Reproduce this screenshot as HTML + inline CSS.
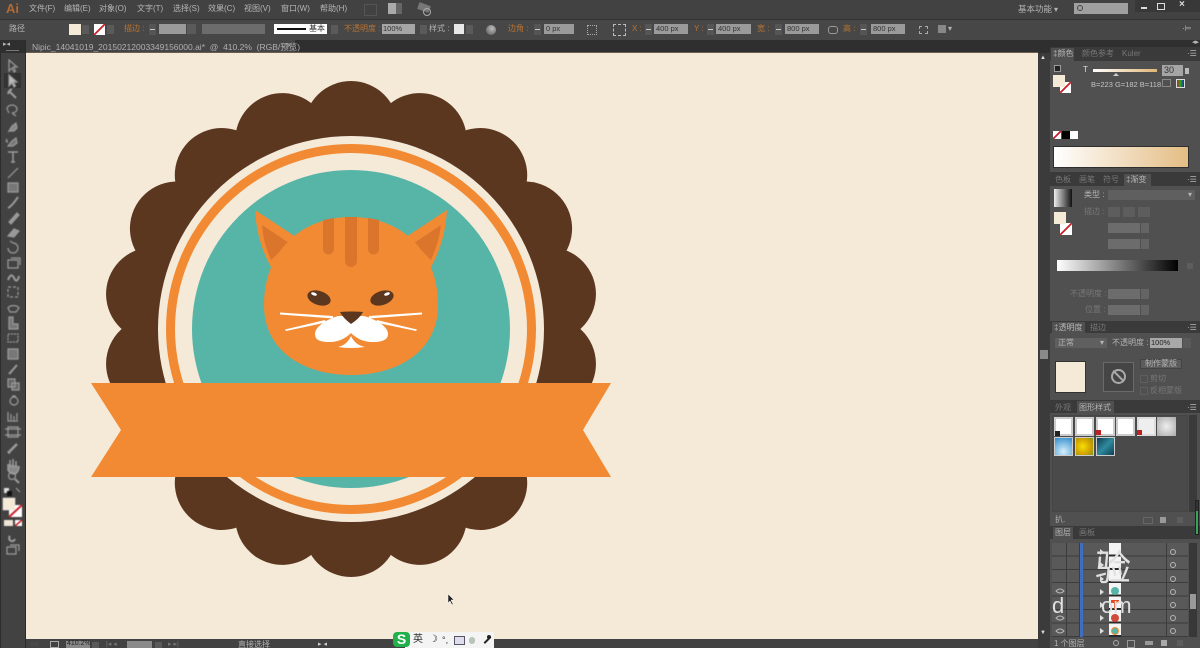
<!DOCTYPE html>
<html>
<head>
<meta charset="utf-8">
<style>
html,body{margin:0;padding:0;width:1200px;height:648px;overflow:hidden;background:#3f3f3f}
#r{position:relative;width:1200px;height:648px;overflow:hidden;font-family:"Liberation Sans","Noto Sans CJK SC",sans-serif;font-size:8px;color:#b5b5b5}
#r div,#r span.t{position:absolute}
.t{white-space:nowrap;line-height:10px;filter:blur(.35px)}
.o{color:#b8732f}
.f{background:#9a9a9a;color:#333}
.d{background:#6c6c6c}
.a{background:#5a5a5a;width:7px}
.s{background:linear-gradient(#c8c8c8,#c8c8c8) center/5px 1px no-repeat,#555;width:7px}
.dim{color:#777}
svg{position:absolute;left:0;top:0}
</style>
</head>
<body>
<div id="r">
<!-- top bars -->
<div style="left:0;top:0;width:1200px;height:19px;background:#424242"></div>
<div style="left:0;top:19px;width:1200px;height:1px;background:#333"></div>
<div style="left:0;top:20px;width:1200px;height:20px;background:#474747"></div>
<div style="left:0;top:40px;width:1200px;height:13px;background:#2f2f2f"></div>
<div style="left:26px;top:40px;width:269px;height:13px;background:#454545"></div>
<div style="left:26px;top:52px;width:1012px;height:1px;background:#6b5d50"></div>
<!-- canvas -->
<div style="left:26px;top:53px;width:1012px;height:586px;background:#f5e9d8"></div>

<span class="t" style="left:6px;top:2px;font-size:13px;line-height:14px;font-weight:bold;color:#b06a35">Ai</span>
<span class="t" style="left:29px;top:4px">文件(F)</span>
<span class="t" style="left:64px;top:4px">编辑(E)</span>
<span class="t" style="left:99px;top:4px">对象(O)</span>
<span class="t" style="left:137px;top:4px">文字(T)</span>
<span class="t" style="left:173px;top:4px">选择(S)</span>
<span class="t" style="left:208px;top:4px">效果(C)</span>
<span class="t" style="left:244px;top:4px">视图(V)</span>
<span class="t" style="left:281px;top:4px">窗口(W)</span>
<span class="t" style="left:320px;top:4px">帮助(H)</span>
<div style="left:364px;top:4px;width:11px;height:10px;border:1px solid #555"></div>
<div style="left:388px;top:3px;width:8px;height:11px;background:#aaa"></div>
<div style="left:396px;top:3px;width:6px;height:11px;background:#666"></div>
<div style="left:418px;top:4px;width:12px;height:7px;background:#777;transform:rotate(20deg)"></div>
<div style="left:423px;top:8px;width:6px;height:6px;border:1px solid #aaa;border-radius:50%"></div>
<span class="t" style="left:1018px;top:4px;font-size:8.5px">基本功能</span>
<span class="t" style="left:1054px;top:5px">▾</span>
<div style="left:1074px;top:3px;width:54px;height:11px;background:#a0a0a0"></div>
<div style="left:1077px;top:5px;width:4px;height:4px;border:1px solid #444;border-radius:50%"></div>
<div style="left:1135px;top:0;width:65px;height:12px;background:#383838"></div>
<div style="left:1141px;top:7px;width:6px;height:2px;background:#ddd"></div>
<div style="left:1157px;top:3px;width:6px;height:5px;border:1px solid #ddd"></div>
<span class="t" style="left:1179px;top:0;font-size:10px;font-weight:bold;color:#ddd">×</span>

<!-- control bar -->
<span class="t" style="left:9px;top:24px">路径</span>
<div style="left:69px;top:24px;width:12px;height:11px;background:#f5e9d8"></div>
<div class="a" style="left:82px;top:25px;height:9px"></div>
<div style="left:94px;top:24px;width:11px;height:11px;background:linear-gradient(135deg,#fff 44%,#c8202c 44%,#c8202c 56%,#fff 56%)"></div>
<div class="a" style="left:107px;top:25px;height:9px"></div>
<span class="t o" style="left:124px;top:24px">描边 :</span>
<div class="s" style="left:149px;top:24px;height:11px"></div>
<div class="f" style="left:159px;top:24px;width:27px;height:10px"></div>
<div class="a" style="left:187px;top:24px;width:9px;height:10px"></div>
<div class="d" style="left:202px;top:24px;width:63px;height:10px"></div>
<div style="left:274px;top:24px;width:53px;height:10px;background:#fff"></div>
<div style="left:277px;top:28px;width:29px;height:2px;background:#111"></div>
<span class="t" style="left:309px;top:24px;color:#333">基本</span>
<div class="a" style="left:331px;top:25px;height:9px"></div>
<span class="t o" style="left:344px;top:24px">不透明度 :</span>
<div class="f" style="left:382px;top:24px;width:33px;height:10px;background:#a5a5a5"></div>
<span class="t" style="left:383px;top:24px;color:#333;font-size:7.5px">100%</span>
<div class="a" style="left:420px;top:25px;height:9px"></div>
<span class="t" style="left:429px;top:24px">样式 :</span>
<div style="left:454px;top:24px;width:10px;height:10px;background:#e8e8e8"></div>
<div class="a" style="left:466px;top:25px;height:9px"></div>
<div style="left:486px;top:25px;width:10px;height:10px;border-radius:50%;background:radial-gradient(circle at 60% 35%,#bbb,#555)"></div>
<span class="t o" style="left:508px;top:24px">边角 :</span>
<div class="s" style="left:534px;top:24px;height:11px"></div>
<div class="f" style="left:544px;top:24px;width:30px;height:10px"></div>
<span class="t" style="left:546px;top:24px;color:#333;font-size:7.5px">0 px</span>
<div style="left:587px;top:25px;width:8px;height:8px;border:1px dotted #aaa"></div>
<div style="left:613px;top:24px;width:11px;height:10px;border:1px dashed #bbb"></div>
<span class="t o" style="left:632px;top:24px">X :</span>
<div class="s" style="left:645px;top:24px;height:11px"></div>
<div class="f" style="left:654px;top:24px;width:34px;height:10px"></div>
<span class="t" style="left:656px;top:24px;color:#333;font-size:7.5px">400 px</span>
<span class="t o" style="left:694px;top:24px">Y :</span>
<div class="s" style="left:707px;top:24px;height:11px"></div>
<div class="f" style="left:716px;top:24px;width:35px;height:10px"></div>
<span class="t" style="left:718px;top:24px;color:#333;font-size:7.5px">400 px</span>
<span class="t o" style="left:757px;top:24px">宽 :</span>
<div class="s" style="left:775px;top:24px;height:11px"></div>
<div class="f" style="left:785px;top:24px;width:34px;height:10px"></div>
<span class="t" style="left:787px;top:24px;color:#333;font-size:7.5px">800 px</span>
<div style="left:828px;top:26px;width:8px;height:6px;border:1px solid #999;border-radius:3px"></div>
<span class="t o" style="left:843px;top:24px">高 :</span>
<div class="s" style="left:860px;top:24px;height:11px"></div>
<div class="f" style="left:871px;top:24px;width:34px;height:10px"></div>
<span class="t" style="left:873px;top:24px;color:#333;font-size:7.5px">800 px</span>
<div style="left:919px;top:26px;width:7px;height:6px;border:1px dashed #aaa"></div>
<div style="left:938px;top:25px;width:8px;height:8px;background:#888"></div>
<span class="t" style="left:948px;top:24px">▾</span>
<span class="t" style="left:1182px;top:24px">·⊨</span>

<span class="t" style="left:32px;top:42px;font-size:8.5px;color:#b0b0b0">Nipic_14041019_20150212003349156000.ai* &nbsp;@&nbsp; 410.2% &nbsp;(RGB/预览)</span>
<span class="t" style="left:287px;top:41px">×</span>

<!-- artwork -->
<svg width="1200" height="648" viewBox="0 0 1200 648" style="z-index:2">
<defs><clipPath id="cv"><rect x="26" y="53" width="1012" height="586"/></clipPath></defs>
<g clip-path="url(#cv)">
<g fill="#5b3720">
<circle cx="351" cy="329" r="225"/>
<g id="b"><circle cx="351" cy="128" r="47"/></g>
<use href="#b" transform="rotate(20 351 329)"/><use href="#b" transform="rotate(40 351 329)"/>
<use href="#b" transform="rotate(60 351 329)"/><use href="#b" transform="rotate(80 351 329)"/>
<use href="#b" transform="rotate(100 351 329)"/><use href="#b" transform="rotate(120 351 329)"/>
<use href="#b" transform="rotate(140 351 329)"/><use href="#b" transform="rotate(160 351 329)"/>
<use href="#b" transform="rotate(180 351 329)"/><use href="#b" transform="rotate(200 351 329)"/>
<use href="#b" transform="rotate(220 351 329)"/><use href="#b" transform="rotate(240 351 329)"/>
<use href="#b" transform="rotate(260 351 329)"/><use href="#b" transform="rotate(280 351 329)"/>
<use href="#b" transform="rotate(300 351 329)"/><use href="#b" transform="rotate(320 351 329)"/>
<use href="#b" transform="rotate(340 351 329)"/>
</g>
<circle cx="351" cy="329" r="193" fill="#f5e9d8"/>
<circle cx="351" cy="329" r="185" fill="#f18a32"/>
<circle cx="351" cy="329" r="176" fill="#f5e9d8"/>
<circle cx="351" cy="329" r="159" fill="#57b5a8"/>
<!-- cat -->
<path fill="#f18a32" d="M255 210 L296 237 L274 272 Q257 245 255 210Z"/>
<path fill="#f18a32" d="M447 210 L406 237 L428 272 Q445 245 447 210Z"/>
<path fill="#dc752c" d="M262 225 L289 243 L271 260 Q263 242 262 225Z"/>
<path fill="#dc752c" d="M441 225 L414 243 L431 260 Q439 242 441 225Z"/>
<path fill="#f18a32" d="M351 217 C300 217 264 252 264 305 C264 352 305 375 351 375 C397 375 438 352 438 305 C438 252 402 217 351 217Z"/>
<path fill="#dc752c" d="M323 220 Q328 219 334 218 V249 a5.500 5.500 0 0 1-11 0Z"/>
<path fill="#dc752c" d="M345 217 H357 V261 a6 6 0 0 1-12 0Z"/>
<path fill="#dc752c" d="M368 218 Q374 219 379 220 V249 a5.500 5.500 0 0 1-11 0Z"/>
<ellipse cx="319" cy="298" rx="12" ry="7" fill="#5b3720" transform="rotate(18 319 298)"/>
<ellipse cx="382" cy="298" rx="12" ry="7" fill="#5b3720" transform="rotate(-18 382 298)"/>
<ellipse cx="314" cy="294" rx="3" ry="1.500" fill="#fff" transform="rotate(20 314 294)"/>
<ellipse cx="387" cy="294" rx="3" ry="1.500" fill="#fff" transform="rotate(-20 387 294)"/>
<g fill="#fff">
<path d="M280 312.500 L333 316 L333 318.500 L280 314.500 Z"/>
<path d="M285 329.500 L325 320 L326 322.500 L286 331 Z"/>
<path d="M422 312.500 L369 316 L369 318.500 L422 314.500 Z"/>
<path d="M417 329.500 L377 320 L376 322.500 L416 331 Z"/>
<path d="M338 316 C328 319 315 326 315 334 C315 341 322 342 330 342 C339 342 346 338 351 333 C356 338 363 342 372 342 C380 342 388 341 388 334 C388 326 375 319 364 316Z"/>
<path d="M338 347 Q347 345 351 336 Q355 345 365 347 Q351 349 338 347Z"/>
</g>
<path fill="#5b3720" d="M340 312 Q351 311 363 312 Q360 318 351 324 Q343 318 340 312Z"/>
<path fill="#f18a32" d="M91 383 H611 L583 430 L611 477 H91 L121 430Z"/>
<!-- cursor -->
<path d="M448 594 V603 L450 601 L452 605 L453 604 L451 600 H454Z" fill="#222" stroke="#fff" stroke-width=".5"/>
</g>
</svg>

<!-- left toolbar -->
<div style="left:0;top:53px;width:26px;height:595px;background:#424242"></div>
<div style="left:0;top:40px;width:26px;height:13px;background:#2f2f2f"></div>
<div style="left:0;top:53px;width:1px;height:595px;background:#2c2c2c"></div>
<div style="left:25px;top:40px;width:1px;height:608px;background:#2b2b2b"></div>
<span class="t" style="left:3px;top:40px;font-size:7px">▸◂</span>
<div style="left:6px;top:50px;width:13px;height:1px;background:#777"></div>
<div style="left:4px;top:73px;width:17px;height:15px;background:#333"></div>
<svg width="26" height="648" viewBox="0 0 26 648" style="z-index:3;filter:blur(.45px)">
<g fill="none" stroke="#9c9c9c" stroke-width="1.200">
<path d="M9 60 V71 L12 68 L14 72 L15.500 71 L13.500 67 H17Z"/>
<path d="M9 75 V86 L12 83 L14 87 L15.500 86 L13.500 82 H17Z" fill="#bbb"/>
<path d="M9 91 L16 98 M9 91 l3 -2 M9 91 l-1 3" stroke-width="2"/>
<path d="M7 109 a5 4 0 1 1 5 4 M12 113 l4 3 M7 109 l2 4"/>
<path d="M9 131 L12 126 L16 123 L17 128 L14 131Z M8 132 L10 130" fill="#888"/>
<path d="M8 146 L12 141 L16 138 L17 143 L13 146Z M7 139 q-2 3 1 3" fill="#777"/>
<path d="M8 152 H18 M13 152 V162 M11 162 H15" stroke-width="1.500"/>
<path d="M8 178 L18 168"/>
<path d="M8 183 H18 V192 H8Z" fill="#777"/>
<path d="M8 208 Q12 206 18 197" stroke-width="2"/>
<path d="M9 222 L17 213 L19 215 L11 224Z" fill="#999"/>
<path d="M8 236 L14 229 L19 231 L14 237Z" fill="#999"/>
<path d="M8 248 a5 5 0 1 0 5 -5 M13 243 l-3 -2"/>
<path d="M8 260 H18 V268 H8Z M11 258 H20 V265" />
<path d="M8 280 Q11 272 14 278 T19 276" stroke-width="2"/>
<path d="M8 287 H18 V297 H8Z" stroke-dasharray="3 2"/>
<path d="M8 308 a6 4 0 0 1 11 0 l-3 4 h-6Z"/>
<path d="M9 317 V329 H18 V324 H13 V317Z" fill="#777"/>
<path d="M8 334 H18 V342 H8Z" stroke-dasharray="2 1"/>
<path d="M8 349 H18 V359 H8Z" fill="#777"/>
<path d="M10 373 L17 365 M9 374 l2 -2" stroke-width="2"/>
<path d="M8 379 H15 V387 H8Z M12 383 H19 V390 H12Z" fill="#666"/>
<circle cx="14" cy="401" r="4"/><path d="M12 396 H16"/>
<path d="M8 412 V421 H18 M11 420 V414 M14 420 V416 M17 420 V413"/>
<path d="M8 427 H18 V437 H8Z M5 429 H21 M5 435 H21"/>
<path d="M8 453 L17 444 M8 453 l2 -1" stroke-width="2.500"/>
<path d="M8 464 V470 Q10 474 15 474 Q19 472 19 466 M10 468 V460 M13 468 V459 M16 468 V461" fill="#888" stroke-width="1.500"/>
<circle cx="12" cy="476" r="3.500"/><path d="M15 479 L19 483" stroke-width="2"/>
<path d="M10 536 a3 3 0 1 0 5 3" stroke-width="2"/>
<path d="M7 547 H16 V554 H7Z M10 545 H19 V551"/>
</g>
<path d="M4 488 h5 v5 h-5z" fill="#ddd"/><path d="M7 491 h5 v5 h-5z" fill="#111"/>
<path d="M16 488 l4 4" stroke="#aaa"/>
<rect x="9" y="505" width="13" height="12" fill="#fff"/>
<path d="M9 517 L22 505" stroke="#c8202c" stroke-width="2"/>
<rect x="3" y="498" width="12" height="12" fill="#f5e9d8" stroke="#eee" stroke-width=".5"/>
<rect x="4" y="520" width="9" height="6" fill="#f0e6d8"/>
<rect x="15" y="520" width="7" height="6" fill="#fff"/><path d="M15 526 L22 520" stroke="#c8202c" stroke-width="1.500"/>
</svg>

<!-- right strip -->
<div style="left:1038px;top:53px;width:12px;height:595px;background:#3b3b3b"></div>
<div style="left:1038px;top:40px;width:162px;height:8px;background:#2f2f2f"></div>
<span class="t" style="left:1192px;top:38px;font-size:7px">◂▸</span>
<div style="left:1040px;top:350px;width:8px;height:9px;background:#8a8a8a"></div>
<span class="t" style="left:1040px;top:53px;font-size:6px;color:#ddd">▲</span>
<span class="t" style="left:1040px;top:628px;font-size:6px;color:#ddd">▼</span>
<!-- panels -->
<div style="left:1050px;top:47px;width:150px;height:601px;background:#505050"></div>
<!-- color -->
<div style="left:1050px;top:47px;width:150px;height:14px;background:#3a3a3a"></div>
<div style="left:1051px;top:48px;width:23px;height:13px;background:#505050"></div>
<span class="t" style="left:1053px;top:49px">‡颜色</span>
<span class="t dim" style="left:1082px;top:49px">颜色参考</span>
<span class="t dim" style="left:1122px;top:49px">Kuler</span>
<span class="t" style="left:1187px;top:49px">·☰</span>
<div style="left:1054px;top:65px;width:5px;height:5px;background:#222;border:1px solid #999"></div>
<div style="left:1060px;top:82px;width:11px;height:11px;background:linear-gradient(135deg,#fff 44%,#c8202c 44%,#c8202c 56%,#fff 56%)"></div>
<div style="left:1053px;top:75px;width:12px;height:12px;background:#f5e9d8"></div>
<span class="t" style="left:1083px;top:65px;color:#ddd">T</span>
<div style="left:1093px;top:69px;width:64px;height:3px;background:linear-gradient(90deg,#fff,#e0b676)"></div>
<div style="left:1113px;top:73px;width:0;height:0;border:3px solid transparent;border-bottom-color:#ccc;border-top:0"></div>
<div class="f" style="left:1162px;top:65px;width:21px;height:11px;background:#a5a5a5"></div>
<span class="t" style="left:1164px;top:65px;color:#333;font-size:9px">30</span>
<div style="left:1185px;top:68px;width:4px;height:6px;background:#bbb"></div>
<div style="left:1162px;top:79px;width:7px;height:6px;border:1px solid #888"></div>
<div style="left:1176px;top:79px;width:7px;height:7px;background:linear-gradient(90deg,#c22,#2a2,#22c);border:.5px solid #ddd"></div>
<span class="t" style="left:1091px;top:80px;font-size:7.5px;color:#c4c4c4">B=223 G=182 B=118</span>
<div style="left:1053px;top:131px;width:8px;height:8px;background:linear-gradient(135deg,#fff 42%,#c8202c 42%,#c8202c 58%,#fff 58%)"></div>
<div style="left:1062px;top:131px;width:8px;height:8px;background:#000"></div>
<div style="left:1070px;top:131px;width:8px;height:8px;background:#fff"></div>
<div style="left:1054px;top:147px;width:134px;height:20px;background:linear-gradient(90deg,#fff,#e4bd84);outline:1px solid #2f2f2f"></div>
<!-- gradient -->
<div style="left:1050px;top:172px;width:150px;height:14px;background:#3a3a3a"></div>
<div style="left:1124px;top:174px;width:27px;height:12px;background:#505050"></div>
<span class="t dim" style="left:1055px;top:175px">色板</span>
<span class="t dim" style="left:1079px;top:175px">画笔</span>
<span class="t dim" style="left:1103px;top:175px">符号</span>
<span class="t" style="left:1126px;top:175px">‡渐变</span>
<span class="t" style="left:1187px;top:175px">·☰</span>
<div style="left:1054px;top:189px;width:18px;height:18px;background:linear-gradient(90deg,#eee,#111)"></div>
<span class="t" style="left:1084px;top:190px">类型 :</span>
<div style="left:1108px;top:190px;width:87px;height:10px;background:#5f5f5f"></div>
<span class="t" style="left:1188px;top:190px">▾</span>
<span class="t dim" style="left:1084px;top:207px">描边 :</span>
<div style="left:1108px;top:207px;width:12px;height:10px;background:#5d5d5d"></div>
<div style="left:1123px;top:207px;width:12px;height:10px;background:#5d5d5d"></div>
<div style="left:1138px;top:207px;width:12px;height:10px;background:#5d5d5d"></div>
<div style="left:1060px;top:223px;width:12px;height:12px;background:linear-gradient(135deg,#fff 44%,#c8202c 44%,#c8202c 56%,#fff 56%)"></div>
<div style="left:1054px;top:212px;width:12px;height:12px;background:#f5e9d8"></div>
<div class="d" style="left:1108px;top:223px;width:32px;height:10px"></div>
<div style="left:1141px;top:223px;width:8px;height:10px;background:#646464"></div>
<div class="d" style="left:1108px;top:239px;width:32px;height:10px"></div>
<div style="left:1141px;top:239px;width:8px;height:10px;background:#646464"></div>
<div style="left:1057px;top:260px;width:121px;height:11px;background:linear-gradient(90deg,#fff,#000)"></div>
<div style="left:1187px;top:263px;width:6px;height:6px;background:#5d5d5d"></div>
<span class="t dim" style="left:1070px;top:289px">不透明度 :</span>
<div class="d" style="left:1108px;top:289px;width:32px;height:10px"></div>
<div style="left:1141px;top:289px;width:8px;height:10px;background:#646464"></div>
<span class="t dim" style="left:1085px;top:305px">位置 :</span>
<div class="d" style="left:1108px;top:305px;width:32px;height:10px"></div>
<div style="left:1141px;top:305px;width:8px;height:10px;background:#646464"></div>
<!-- transparency -->
<div style="left:1050px;top:321px;width:150px;height:12px;background:#3a3a3a"></div>
<div style="left:1052px;top:322px;width:33px;height:11px;background:#505050"></div>
<span class="t" style="left:1054px;top:323px">‡透明度</span>
<span class="t dim" style="left:1090px;top:323px">描边</span>
<span class="t" style="left:1187px;top:323px">·☰</span>
<div style="left:1055px;top:338px;width:52px;height:10px;background:#5f5f5f"></div>
<span class="t" style="left:1058px;top:338px">正常</span>
<span class="t" style="left:1100px;top:338px">▾</span>
<span class="t" style="left:1112px;top:338px">不透明度 :</span>
<div style="left:1150px;top:338px;width:32px;height:10px;background:#a8a8a8"></div>
<span class="t" style="left:1151px;top:338px;color:#222;font-size:7.5px">100%</span>
<div class="a" style="left:1183px;top:338px;width:8px;height:10px"></div>
<div style="left:1056px;top:362px;width:29px;height:30px;background:#f5e9d8;box-shadow:0 0 0 1px #333"></div>
<div style="left:1103px;top:362px;width:31px;height:30px;background:#454545;border:1px solid #6a6a6a;box-sizing:border-box"></div>
<div style="left:1111px;top:369px;width:11px;height:11px;border:2px solid #aaa;border-radius:50%"></div>
<div style="left:1111px;top:375px;width:15px;height:2px;background:#aaa;transform:rotate(45deg)"></div>
<div style="left:1140px;top:359px;width:42px;height:10px;background:#5c5c5c;border:1px solid #444;box-sizing:border-box"></div>
<span class="t" style="left:1145px;top:359px">制作蒙版</span>
<div style="left:1140px;top:375px;width:6px;height:6px;border:1px solid #5e5e5e"></div>
<span class="t dim" style="left:1150px;top:374px">剪切</span>
<div style="left:1140px;top:387px;width:6px;height:6px;border:1px solid #5e5e5e"></div>
<span class="t dim" style="left:1150px;top:386px">反相蒙版</span>
<!-- styles -->
<div style="left:1050px;top:400px;width:150px;height:13px;background:#3a3a3a"></div>
<div style="left:1077px;top:401px;width:37px;height:12px;background:#505050"></div>
<span class="t dim" style="left:1055px;top:403px">外观</span>
<span class="t" style="left:1079px;top:403px">图形样式</span>
<span class="t" style="left:1187px;top:403px">·☰</span>
<div style="left:1052px;top:415px;width:136px;height:97px;background:#4a4a4a;border:1px solid #454545;box-sizing:border-box"></div>
<div style="left:1189px;top:415px;width:8px;height:97px;background:#3a3a3a"></div>
<div style="left:1054px;top:417px;width:19px;height:19px;background:#fff;border:2px solid #ccc;box-sizing:border-box"></div>
<div style="left:1075px;top:417px;width:19px;height:19px;background:#fff;border:2px solid #ccc;box-sizing:border-box"></div>
<div style="left:1096px;top:417px;width:19px;height:19px;background:#fff;border:2px solid #ccc;box-sizing:border-box"></div>
<div style="left:1116px;top:417px;width:19px;height:19px;background:#fff;border:2px solid #ccc;box-sizing:border-box"></div>
<div style="left:1137px;top:417px;width:19px;height:19px;background:#eee;border:2px solid #ddd;box-sizing:border-box"></div>
<div style="left:1157px;top:417px;width:19px;height:19px;background:radial-gradient(circle,#eee,#aaa)"></div>
<div style="left:1096px;top:430px;width:5px;height:5px;background:#b22"></div>
<div style="left:1137px;top:430px;width:5px;height:5px;background:#b22"></div>
<div style="left:1055px;top:431px;width:5px;height:5px;background:#222"></div>
<div style="left:1054px;top:437px;width:19px;height:19px;background:radial-gradient(circle at 50% 80%,#d8effc,#2f8ccb);border:1px solid #ccc;box-sizing:border-box"></div>
<div style="left:1075px;top:437px;width:19px;height:19px;background:radial-gradient(circle at 40% 50%,#f6e000,#d0a000 60%,#7a9a20);border:1px solid #ccc;box-sizing:border-box"></div>
<div style="left:1096px;top:437px;width:19px;height:19px;background:linear-gradient(135deg,#123c55,#2f8a9c,#0f3f55);border:1px solid #ccc;box-sizing:border-box"></div>
<span class="t" style="left:1055px;top:515px">扒.</span>
<div style="left:1143px;top:517px;width:8px;height:5px;border:1px solid #666"></div>
<div style="left:1160px;top:517px;width:6px;height:6px;background:#999"></div>
<div style="left:1177px;top:517px;width:6px;height:6px;background:#5d5d5d"></div>
<!-- layers -->
<div style="left:1050px;top:526px;width:150px;height:13px;background:#3a3a3a"></div>
<div style="left:1053px;top:527px;width:20px;height:12px;background:#505050"></div>
<span class="t" style="left:1055px;top:528px">图层</span>
<span class="t dim" style="left:1079px;top:528px">画板</span>
<div style="left:1052px;top:543px;width:136px;height:94px;background:repeating-linear-gradient(180deg,#595959 0,#595959 12.400px,#3c3c3c 12.400px,#3c3c3c 13.400px)"></div>
<div style="left:1066px;top:543px;width:1px;height:94px;background:#3c3c3c"></div>
<div style="left:1079px;top:543px;width:1px;height:94px;background:#3c3c3c"></div>
<div style="left:1166px;top:543px;width:1px;height:94px;background:#3c3c3c"></div>
<div style="left:1080px;top:543px;width:3px;height:94px;background:#3f6fc0"></div>
<div style="left:1109px;top:543px;width:12px;height:94px;background:repeating-linear-gradient(180deg,#f4f4f4 0,#f4f4f4 11.400px,#2a2a2a 11.400px,#2a2a2a 13.400px)"></div>
<div style="left:1111px;top:587px;width:8px;height:8px;background:#57b5a8;border-radius:50%"></div>
<div style="left:1111px;top:600px;width:8px;height:3px;background:#e34a20"></div>
<div style="left:1114px;top:600px;width:2px;height:9px;background:#e34a20"></div>
<div style="left:1111px;top:614px;width:8px;height:8px;background:#d04a3a;border-radius:50%"></div>
<div style="left:1111px;top:627px;width:8px;height:8px;background:#57b5a8;border:1px solid #f28a30;border-radius:50%;box-sizing:border-box"></div>
<svg width="1200" height="648" viewBox="0 0 1200 648" style="z-index:1">
<g fill="none" stroke="#b5b5b5">
<circle cx="1173" cy="552" r="2.500"/><circle cx="1173" cy="565" r="2.500"/><circle cx="1173" cy="579" r="2.500"/><circle cx="1173" cy="592" r="2.500"/><circle cx="1173" cy="605" r="2.500"/><circle cx="1173" cy="618" r="2.500"/><circle cx="1173" cy="631" r="2.500"/>
<path d="M1056 591 q4 -4 8 0 q-4 4 -8 0Z M1056 618 q4 -4 8 0 q-4 4 -8 0Z M1056 631 q4 -4 8 0 q-4 4 -8 0Z"/>
</g>
<g fill="#ddd"><path d="M1100 549 l4 3 l-4 3Z M1100 562 l4 3 l-4 3Z M1100 576 l4 3 l-4 3Z M1100 589 l4 3 l-4 3Z M1100 602 l4 3 l-4 3Z M1100 615 l4 3 l-4 3Z M1100 628 l4 3 l-4 3Z"/></g>
</svg>
<div style="left:1189px;top:543px;width:8px;height:94px;background:#383838"></div>
<div style="left:1190px;top:594px;width:6px;height:15px;background:#999"></div>
<div style="left:1195px;top:500px;width:4px;height:35px;background:linear-gradient(180deg,#333 30%,#3aa35a 30%);border:1px solid #222;box-sizing:border-box"></div>
<span class="t" style="left:1054px;top:639px">1 个图层</span>
<div style="left:1113px;top:640px;width:4px;height:4px;border:1px solid #aaa;border-radius:50%"></div>
<div style="left:1127px;top:640px;width:6px;height:6px;border:1px solid #999"></div>
<div style="left:1145px;top:641px;width:8px;height:4px;background:#999"></div>
<div style="left:1161px;top:640px;width:6px;height:6px;background:#aaa"></div>
<div style="left:1177px;top:640px;width:6px;height:6px;background:#5d5d5d"></div>
<!-- watermark -->
<span class="t" style="left:1095px;top:548px;z-index:4;font-size:36px;line-height:40px;color:#e0e0e0;filter:none">验</span>
<span class="t" style="left:1052px;top:594px;z-index:4;font-size:22px;line-height:24px;color:#e0e0e0;filter:none">d</span>
<span class="t" style="left:1101px;top:594px;z-index:4;font-size:22px;line-height:24px;color:#e0e0e0;filter:none">om</span>

<!-- status bar -->
<div style="left:26px;top:639px;width:1012px;height:9px;background:#424242"></div>
<span class="t" style="left:30px;top:640px;font-size:7px;color:#666">○○</span>
<div style="left:50px;top:641px;width:7px;height:5px;border:1px solid #aaa"></div>
<div style="left:66px;top:641px;width:24px;height:7px;background:#888"></div>
<span class="t" style="left:67px;top:640px;color:#222;font-size:7px;line-height:8px">410.2%</span>
<div class="a" style="left:92px;top:642px;height:6px"></div>
<span class="t dim" style="left:106px;top:640px;font-size:7px">|◂ ◂</span>
<div style="left:127px;top:641px;width:25px;height:7px;background:#8a8a8a"></div>
<div class="a" style="left:155px;top:642px;height:6px"></div>
<span class="t dim" style="left:168px;top:640px;font-size:7px">▸ ▸|</span>
<span class="t" style="left:238px;top:640px">直接选择</span>
<span class="t" style="left:318px;top:640px;font-size:7px;color:#ccc">▸ ◂</span>
<!-- sogou -->
<div style="left:405px;top:632px;width:89px;height:16px;background:#f4f4f4;z-index:5"></div>
<div style="left:393px;top:632px;width:17px;height:15px;background:#21b14b;border-radius:4px;z-index:5;color:#fff;font-weight:bold;font-size:14px;line-height:15px;text-align:center">S</div>
<span class="t" style="left:413px;top:634px;z-index:6;color:#333;font-size:10px;line-height:12px;filter:none">英</span>
<span class="t" style="left:429px;top:634px;z-index:6;color:#222;font-size:10px;line-height:12px;filter:none">☽</span>
<span class="t" style="left:442px;top:634px;z-index:6;color:#333;font-size:9px;line-height:12px;filter:none">°,</span>
<div style="left:454px;top:636px;width:9px;height:7px;border:1px solid #556;z-index:6;background:#dde"></div>
<div style="left:469px;top:637px;width:6px;height:7px;background:#b8c4b8;border-radius:3px;z-index:6"></div>
<div style="left:483px;top:639px;width:9px;height:2px;background:#222;transform:rotate(-45deg);z-index:6"></div>
<div style="left:487px;top:635px;width:4px;height:4px;background:#222;border-radius:50%;z-index:6"></div>
</div>
</body>
</html>
